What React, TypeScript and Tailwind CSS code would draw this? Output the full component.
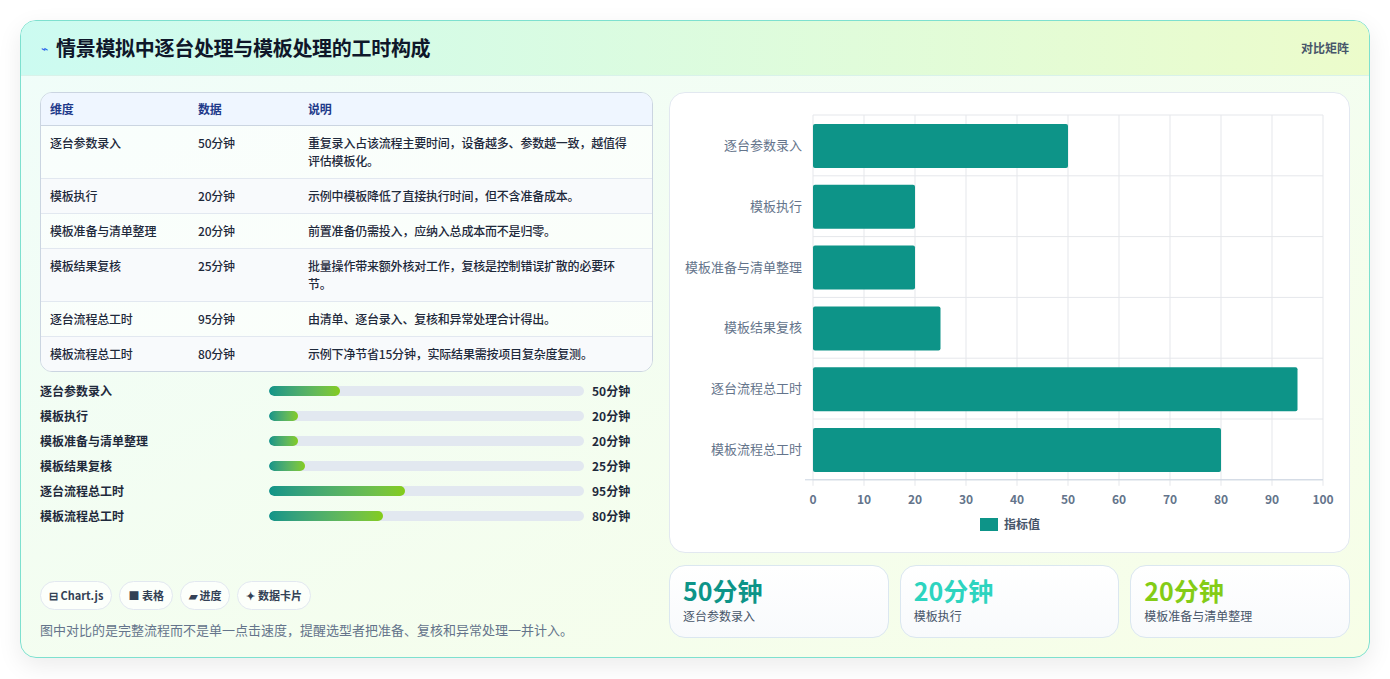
import React from "react";

const rows = [
  ["逐台参数录入", "50分钟", "重复录入占该流程主要时间，设备越多、参数越一致，越值得评估模板化。"],
  ["模板执行", "20分钟", "示例中模板降低了直接执行时间，但不含准备成本。"],
  ["模板准备与清单整理", "20分钟", "前置准备仍需投入，应纳入总成本而不是归零。"],
  ["模板结果复核", "25分钟", "批量操作带来额外核对工作，复核是控制错误扩散的必要环节。"],
  ["逐台流程总工时", "95分钟", "由清单、逐台录入、复核和异常处理合计得出。"],
  ["模板流程总工时", "80分钟", "示例下净节省15分钟，实际结果需按项目复杂度复测。"],
];
const vals = [50, 20, 20, 25, 95, 80];

function Chart() {
  const x0 = 143, w = 510, y0 = 22, band = 60.8;
  return (
    <svg width="679" height="460" className="block">
      {Array.from({ length: 11 }).map((_, i) => (
        <g key={i}>
          <line x1={x0 + i * 51} x2={x0 + i * 51} y1={y0} y2={y0 + band * 6 + 6} stroke="#e5e7eb" />
          <text x={x0 + i * 51} y={411} textAnchor="middle" fontSize="12" fill="#64748b" fontWeight="600">{i * 10}</text>
        </g>
      ))}
      {Array.from({ length: 7 }).map((_, i) => (
        <line key={i} x1={x0} x2={x0 + w} y1={y0 + i * band} y2={y0 + i * band} stroke="#e5e7eb" />
      ))}
      <line x1={x0 - 8} x2={x0 + w} y1={y0 + band * 6} y2={y0 + band * 6} stroke="#cbd5e1" />
      {rows.map((r, i) => (
        <g key={i}>
          <rect x={x0} y={y0 + i * band + 9} width={vals[i] * 5.1} height={44} rx="2" fill="#0d9488" />
          <text x={132} y={y0 + i * band + 35} textAnchor="end" fontSize="13" fill="#64748b">{r[0]}</text>
        </g>
      ))}
      <rect x={310} y={425} width={18} height={13} fill="#0d9488" />
      <text x={334} y={436} fontSize="12" fill="#475569" fontWeight="600">指标值</text>
    </svg>
  );
}

export default function App() {
  return (
    <div className="w-[1390px] h-[679px] bg-white p-5 pb-0" style={{ fontFamily: "'Noto Sans CJK SC', 'Noto Sans', sans-serif" }}>
      <div className="h-[638px] rounded-2xl border border-[#7ee0cf] overflow-hidden bg-gradient-to-br from-[#f0fdfa] to-[#f7fee7] shadow-[0_8px_24px_rgba(0,0,0,0.08)] flex flex-col">
        <div className="h-[55px] flex items-center justify-between px-5 bg-gradient-to-r from-[#ccfbf1] to-[#ecfccb] border-b border-[#d9f2ea]">
          <div className="flex items-center gap-2">
            <span className="text-[#2563eb] text-[12px]">⌁</span>
            <span className="text-[20px] font-bold text-[#0f172a] tracking-[-0.3px]">情景模拟中逐台处理与模板处理的工时构成</span>
          </div>
          <span className="text-[12px] font-semibold text-[#475569]">对比矩阵</span>
        </div>
        <div className="flex-1 flex gap-4 px-[19px] pt-4 pb-[18px]">
          <div className="w-[616px] flex flex-col">
            <div className="rounded-xl border border-[#cbd5e1] overflow-hidden bg-white/60 text-[12px] tracking-[-0.2px]">
              <div className="grid grid-cols-[148px_110px_1fr] h-[33px] items-center px-[9px] bg-[#eff6ff] border-b border-[#cbd5e1] text-[#1e3a8a] font-semibold">
                <span>维度</span><span>数据</span><span>说明</span>
              </div>
              {rows.map((r, i) => (
                <div key={i} className={`grid grid-cols-[148px_110px_1fr] items-start px-[9px] border-b last:border-b-0 border-[#e2e8f0] text-[#1e293b] font-medium ${i === 0 ? "py-[8px]" : "py-[8px]"} ${i % 2 === 1 ? "bg-[#f8fafc]" : ""}`}>
                  <span className="leading-[18px]">{r[0]}</span>
                  <span className="leading-[18px]">{r[1]}</span>
                  <span className="leading-[18px] pr-2">{r[2]}</span>
                </div>
              ))}
            </div>
            <div className="flex flex-col gap-[7px] mt-[10px]">
              {rows.map((r, i) => (
                <div key={i} className="flex items-center h-[18px] text-[12px] font-semibold text-[#1e293b]">
                  <span className="w-[229px]">{r[0]}</span>
                  <div className="w-[315px] h-[10px] rounded-full bg-[#e2e8f0] overflow-hidden">
                    <div className="h-full rounded-full bg-gradient-to-r from-[#0d9488] to-[#84cc16]" style={{ width: `${vals[i] * 0.453}%` }} />
                  </div>
                  <span className="ml-2">{r[1]}</span>
                </div>
              ))}
            </div>
            <div className="mt-auto flex gap-[7px] text-[11px] font-semibold text-[#334155]">
              {["⊟ Chart.js", "■ 表格", "▰ 进度", "✦ 数据卡片"].map((c) => (
                <span key={c} className="h-[29px] px-[8px] flex items-center rounded-full border border-[#e2e8f0] bg-white/70">{c}</span>
              ))}
            </div>
            <p className="mt-[10px] text-[13px] text-[#64748b]">图中对比的是完整流程而不是单一点击速度，提醒选型者把准备、复核和异常处理一并计入。</p>
          </div>
          <div className="flex-1 flex flex-col gap-3">
            <div className="h-[461px] rounded-2xl border border-[#e2e8f0] bg-white">
              <Chart />
            </div>
            <div className="flex gap-[11px]">
              {[["50分钟", "逐台参数录入", "text-[#0d9488]"], ["20分钟", "模板执行", "text-[#2dd4bf]"], ["20分钟", "模板准备与清单整理", "text-[#84cc16]"]].map(([v, l, c]) => (
                <div key={l} className="flex-1 h-[73px] rounded-2xl border border-[#dbe7f0] bg-gradient-to-b from-white to-[#f8fafc] px-[13px] pt-[8px]">
                  <div className={`text-[25px] font-bold leading-[32px] ${c}`}>{v}</div>
                  <div className="text-[12px] text-[#475569] mt-[1px]">{l}</div>
                </div>
              ))}
            </div>
          </div>
        </div>
      </div>
    </div>
  );
}
